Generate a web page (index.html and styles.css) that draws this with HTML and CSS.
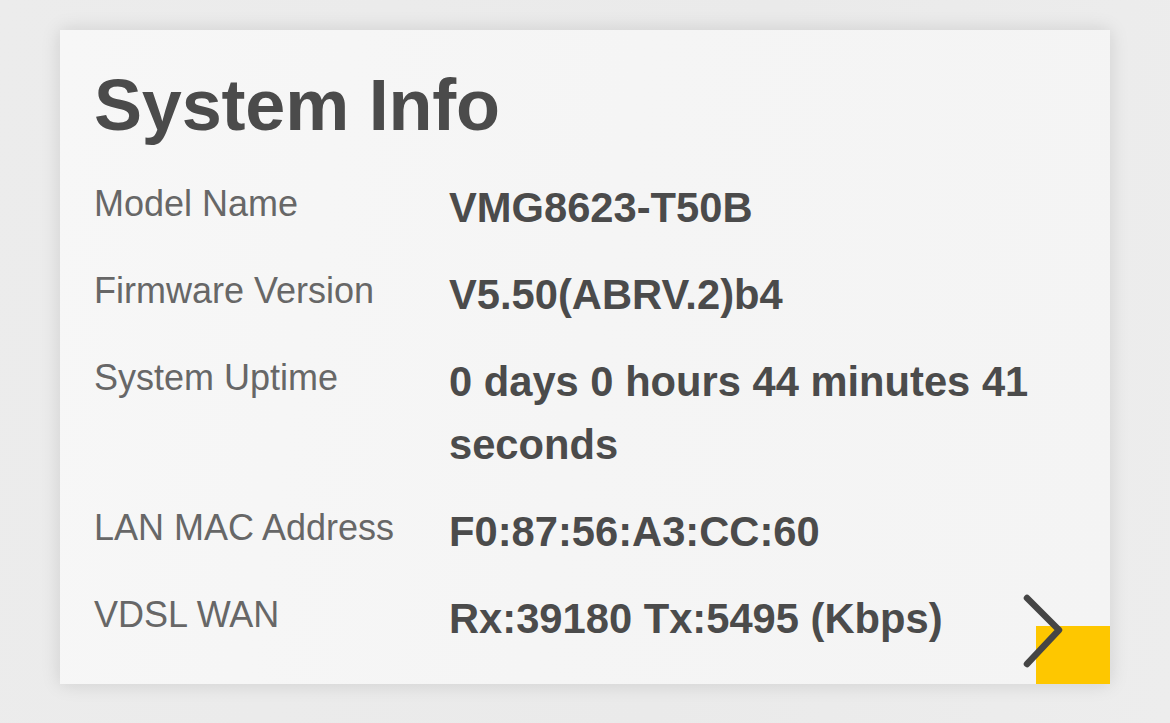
FILE: index.html
```html
<!DOCTYPE html>
<html lang="en">
<head>
<meta charset="utf-8">
<title>System Info</title>
<link rel="stylesheet" href="styles.css">
</head>
<body>
<div class="page">
  <section class="card">
    <h1 class="title">System Info</h1>
    <div class="rows">
      <div class="row">
        <div class="label">Model Name</div>
        <div class="value">VMG8623-T50B</div>
      </div>
      <div class="row">
        <div class="label">Firmware Version</div>
        <div class="value">V5.50(ABRV.2)b4</div>
      </div>
      <div class="row">
        <div class="label">System Uptime</div>
        <div class="value">0 days 0 hours 44 minutes 41 seconds</div>
      </div>
      <div class="row">
        <div class="label">LAN MAC Address</div>
        <div class="value">F0:87:56:A3:CC:60</div>
      </div>
      <div class="row">
        <div class="label">VDSL WAN</div>
        <div class="value">Rx:39180 Tx:5495 (Kbps)</div>
      </div>
    </div>
    <div class="corner"></div>
    <svg class="chevron" width="44" height="76" viewBox="0 0 44 76">
      <polyline points="4,4 36,36 4,70" fill="none" stroke="#454545" stroke-width="6.5" stroke-linecap="round" stroke-linejoin="round"/>
    </svg>
  </section>
</div>
</body>
</html>
```
FILE: styles.css
```css
html, body {
  margin: 0;
  padding: 0;
}
body {
  background: linear-gradient(100deg, #ececec 0%, #eaeaea 60%, #ededed 100%);
  font-family: "Liberation Sans", Arial, Helvetica, sans-serif;
  width: 1170px;
  height: 723px;
  overflow: hidden;
}
.page {
  padding: 30px 0 0 60px;
}
.card {
  position: relative;
  box-sizing: border-box;
  width: 1050px;
  height: 654px;
  background: linear-gradient(100deg, #f7f7f7 0%, #f5f5f5 50%, #f4f4f4 100%);
  box-shadow: 0 0 18px rgba(0, 0, 0, 0.13);
  padding: 39px 30px 0 34px;
}
.title {
  margin: 0;
  font-size: 72px;
  line-height: 72px;
  font-weight: 700;
  color: #4b4b4b;
  letter-spacing: -0.2px;
}
.rows {
  margin-top: 35px;
  display: flex;
  flex-direction: column;
  gap: 24px;
}
.row {
  display: flex;
  align-items: flex-start;
}
.label {
  width: 355px;
  flex: none;
  font-size: 36px;
  line-height: 56px;
  color: #676767;
}
.value {
  flex: 1;
  font-size: 41.7px;
  line-height: 63px;
  font-weight: 700;
  color: #4b4b4b;
  padding-right: 20px;
}
.corner {
  position: absolute;
  right: 0;
  bottom: 0;
  width: 74px;
  height: 58px;
  background: #fec700;
}
.chevron {
  position: absolute;
  left: 963px;
  top: 564px;
}
```
